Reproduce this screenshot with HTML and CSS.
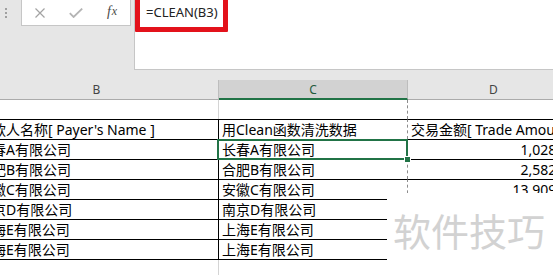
FILE: index.html
```html
<html lang="zh-CN">
    <head>
        <meta charset="UTF-8">
        <meta name="viewport" content="width=device-width, initial-scale=1.0">
        <title>CLEAN</title>

        <link rel="stylesheet" href="styles.css">
    </head>
    <body>

        <!-- formula bar -->
        <div class="formula-bar">
            <div class="fb-left">
                <span class="grip"></span>
                <div class="fb-buttons">
                    <span class="slot">
                        <svg width="10" height="10" viewBox="0 0 10 10"><path d="M0.5 0.5 L9.5 9.5 M9.5 0.5 L0.5 9.5" stroke="#a3a3a3" stroke-width="1.2" fill="none"/></svg>
                    </span>
                    <span class="slot">
                        <svg width="14" height="10" viewBox="0 0 14 10"><path d="M0.8 5.2 L4.6 9 L13.2 0.6" stroke="#b4b4b4" stroke-width="1.8" fill="none"/></svg>
                    </span>
                    <span class="slot fx"><i>f</i><i class="x">x</i></span>
                </div>
            </div>
            <div class="fb-input">
                <span class="formula">=CLEAN(B3)</span>
                <span class="callout"></span>
            </div>
        </div>

        <div class="gap"></div>

        <!-- column headers -->
        <div class="col-headers">
            <div class="hcell">B</div>
            <div class="hcell active">C</div>
            <div class="hcell">D</div>
        </div>

        <!-- cells -->
        <div class="sheet">
            <div class="row blank">
                <div class="cell b"></div><div class="cell c"></div><div class="cell d"></div>
            </div>
            <div class="row data">
                <div class="cell b">付款人名称[ Payer's Name ]</div>
                <div class="cell c">用Clean函数清洗数据</div>
                <div class="cell d">交易金额[ Trade Amount ]</div>
            </div>
            <div class="row data">
                <div class="cell b">长春A有限公司</div>
                <div class="cell c selected">长春A有限公司<span class="sel"></span></div>
                <div class="cell d num">1,028.00</div>
            </div>
            <div class="row data">
                <div class="cell b">合肥B有限公司</div>
                <div class="cell c">合肥B有限公司</div>
                <div class="cell d num">2,582.00</div>
            </div>
            <div class="row data">
                <div class="cell b">安徽C有限公司</div>
                <div class="cell c">安徽C有限公司</div>
                <div class="cell d num">13,909.00</div>
            </div>
            <div class="row data">
                <div class="cell b">南京D有限公司</div>
                <div class="cell c">南京D有限公司</div>
                <div class="cell d"></div>
            </div>
            <div class="row data">
                <div class="cell b">上海E有限公司</div>
                <div class="cell c">上海E有限公司</div>
                <div class="cell d"></div>
            </div>
            <div class="row data last">
                <div class="cell b">上海E有限公司</div>
                <div class="cell c">上海E有限公司</div>
                <div class="cell d"></div>
            </div>
            <div class="row blank fill">
                <div class="cell b"></div><div class="cell c"></div><div class="cell d"></div>
            </div>
        </div>

        <!-- pasted watermark patch -->
        <div class="watermark">软件技巧</div>

    </body>
</html>
```

FILE: styles.css
```css
html, body{
    margin: 0;
    padding: 0;
}

body{
    width: 553px;
    height: 275px;
    overflow: hidden;
    position: relative;
    background: #fff;
    font-family: 'Noto Sans', 'Noto Sans CJK SC', sans-serif;
    color: #000;
}

/* formula bar */
.formula-bar{
    display: flex;
    height: 70px;
    background: #e6e6e6;
}

.fb-left{
    width: 134px;
    display: flex;
    align-items: flex-start;
}

.grip{
    width: 0;
    height: 10px;
    margin: 8px 0 0 5px;
    border-left: 2px dotted #a0a0a0;
}

.fb-buttons{
    box-sizing: border-box;
    width: 110px;
    height: 26px;
    margin-left: 14px;
    display: flex;
    background: #fff;
    border: 1px solid #c6c6c6;
    border-top: none;
}

.slot{
    width: 36px;
    display: flex;
    justify-content: center;
    align-items: center;
}

.fx{
    font-family: 'Liberation Serif', serif;
    font-size: 14px;
    color: #4a4a4a;
    padding-bottom: 2px;
}

.fx .x{
    font-size: 12px;
    margin-left: 1px;
}

.fb-input{
    flex: 1;
    position: relative;
    background: #fff;
    border-left: 1px solid #c6c6c6;
    border-bottom: 1px solid #c6c6c6;
}

.formula{
    display: block;
    padding: 3px 0 0 11px;
    font-size: 13px;
    line-height: 19px;
    color: #222;
}

/* red annotation round the formula */
.callout{
    position: absolute;
    left: 0;
    top: -6px;
    width: 83px;
    height: 28px;
    border: 5px solid #e3121b;
    border-radius: 1px;
}

.gap{
    height: 10px;
    background: #e6e6e6;
}

/* column headers */
.col-headers{
    display: grid;
    grid-template-columns: 244px 189px 172px;
    margin-left: -25px;
    height: 20px;
    background: #e6e6e6;
}

.hcell{
    box-sizing: border-box;
    height: 20px;
    text-align: center;
    font-size: 12px;
    line-height: 19px;
    color: #444;
    border-right: 1px solid #bdbdbd;
    border-bottom: 1px solid #ababab;
}

.hcell.active{
    background: #d2d2d2;
    color: #1f5a3b;
    border-bottom: 2px solid #217346;
}

/* cells */
.sheet{
    margin-left: -25px;
}

.row{
    display: grid;
    grid-template-columns: 244px 189px 172px;
}

.cell{
    box-sizing: border-box;
    padding: 0 3px;
    font-size: 14px;
    line-height: 19px;
    white-space: nowrap;
}

.row.blank{
    height: 19px;
}

.row.blank .b{
    border-right: 1px solid #d4d4d4;
}

.row.fill{
    height: 20px;
}

.row.data .cell{
    height: 20px;
    border-top: 1px solid #000;
}

.row.data.last .cell{
    height: 21px;
    border-bottom: 1px solid #000;
}

.row.data .b{
    border-right: 1px solid #000;
}

.cell.c{
    border-right: 1px dashed #8c8c8c;
}

.cell.num{
    text-align: right;
    padding-right: 4px;
}

.selected{
    position: relative;
}

.sel{
    position: absolute;
    left: -2px;
    top: -1px;
    right: -1px;
    bottom: -1px;
    border: 2px solid #217346;
}

.sel::after{
    content: '';
    position: absolute;
    right: -5px;
    bottom: -5px;
    width: 5px;
    height: 5px;
    background: #217346;
    border: 1px solid #fff;
}

/* white patch with the watermark, lying over the sheet */
.watermark{
    position: absolute;
    left: 387px;
    top: 193px;
    right: 0;
    bottom: 0;
    background: #fff;
    padding: 18px 0 0 6px;
    font-family: 'Noto Sans CJK SC', sans-serif;
    font-size: 38px;
    line-height: 1;
    color: #d2d2d2;
    white-space: nowrap;
}
```
